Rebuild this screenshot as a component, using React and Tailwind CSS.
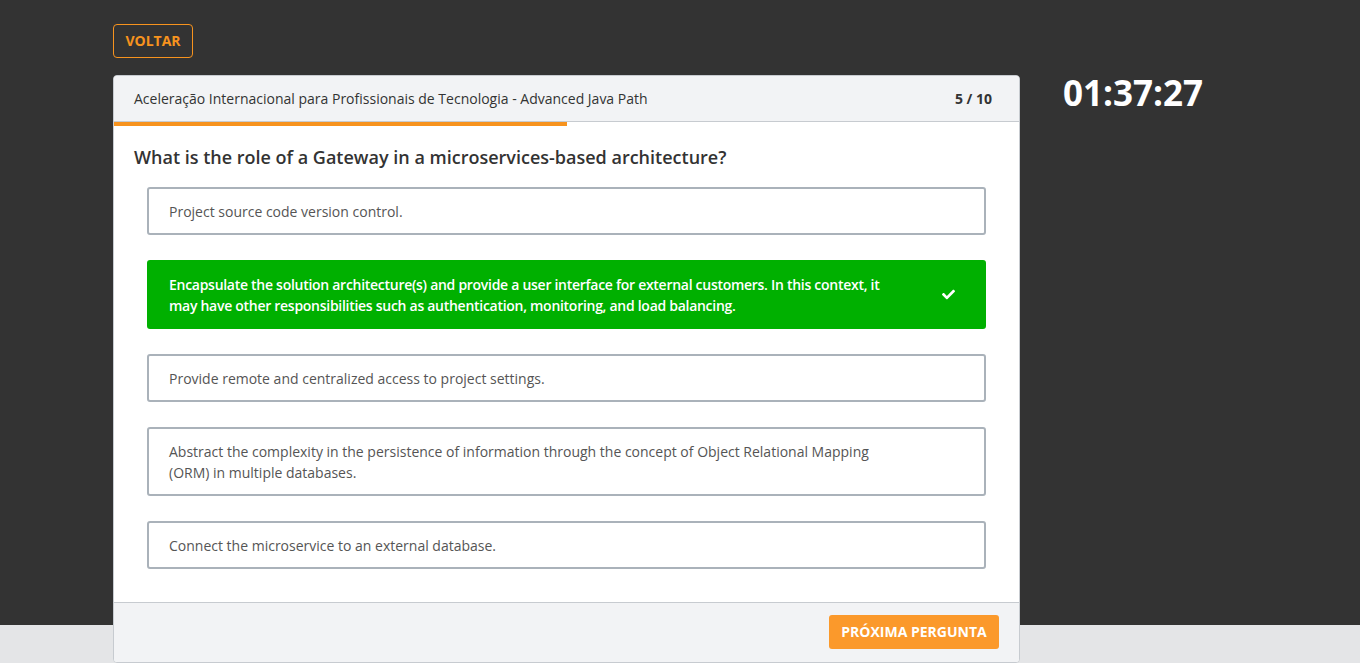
import React from "react";
import { FaCheck } from "react-icons/fa";

const options = [
  { text: "Project source code version control.", correct: false },
  {
    text: "Encapsulate the solution architecture(s) and provide a user interface for external customers. In this context, it may have other responsibilities such as authentication, monitoring, and load balancing.",
    correct: true,
  },
  { text: "Provide remote and centralized access to project settings.", correct: false },
  {
    text: "Abstract the complexity in the persistence of information through the concept of Object Relational Mapping (ORM) in multiple databases.",
    correct: false,
  },
  { text: "Connect the microservice to an external database.", correct: false },
];

export default function App() {
  return (
    <div
      className="min-h-[663px] bg-[#e4e5e7] overflow-hidden"
      style={{ fontFamily: '"Open Sans", "Liberation Sans", sans-serif' }}
    >
      <div className="h-[625px] bg-[#333333] pl-[113px] pt-[24px]">
        <button className="h-[34px] w-[80px] rounded-[4px] border border-[#f7931e] text-[14px] font-bold text-[#f7931e] leading-none">
          VOLTAR
        </button>
        <div className="mt-[17px] flex items-start">
          <div className="w-[907px] rounded-[4px] border border-[#c7cbd0] bg-white overflow-hidden">
            <div className="flex h-[45px] items-center justify-between border-b border-[#c7cbd0] bg-[#f2f3f5] pl-[20px] pr-[27px] text-[14px] text-[#333] box-content">
              <span>Aceleração Internacional para Profissionais de Tecnologia - Advanced Java Path</span>
              <span className="font-bold">5 / 10</span>
            </div>
            <div className="h-[4px] w-full bg-white">
              <div className="h-full w-1/2 bg-[#f7931e]" />
            </div>
            <div className="px-[33px] pt-[19px] pb-[8px]">
              <h2 className="-ml-[13px] text-[18px] font-semibold leading-[24px] text-[#333]">
                What is the role of a Gateway in a microservices-based architecture?
              </h2>
              <div className="mt-[18px] flex flex-col gap-[25px] pb-[25px]">
                {options.map((o, i) =>
                  o.correct ? (
                    <div
                      key={i}
                      className="flex items-center justify-between rounded-[3px] border-2 border-[#00b000] bg-[#00b000] py-[11.5px] pl-[20px] pr-[29px]"
                    >
                      <p className="w-[720px] text-[14px] font-semibold tracking-[-0.28px] leading-[21px] text-white">{o.text}</p>
                      <FaCheck className="text-white" size={13} />
                    </div>
                  ) : (
                    <div
                      key={i}
                      className="rounded-[3px] border-2 border-[#aab2ba] bg-white py-[11.5px] pl-[20px] pr-[29px]"
                    >
                      <p className="w-[720px] text-[14px] leading-[21px] text-[#555]">{o.text}</p>
                    </div>
                  )
                )}
              </div>
            </div>
            <div className="flex h-[60px] items-start justify-end border-t border-[#c7cbd0] bg-[#f2f3f5] pr-[20px] pt-[12px]">
              <button className="h-[34px] w-[170px] rounded-[3px] bg-[#fb992b] text-[14px] font-bold text-white leading-none">
                PRÓXIMA PERGUNTA
              </button>
            </div>
          </div>
          <div className="ml-[43px] -mt-[4px] text-[35px] font-bold leading-[44px] text-white">01:37:27</div>
        </div>
      </div>
    </div>
  );
}
